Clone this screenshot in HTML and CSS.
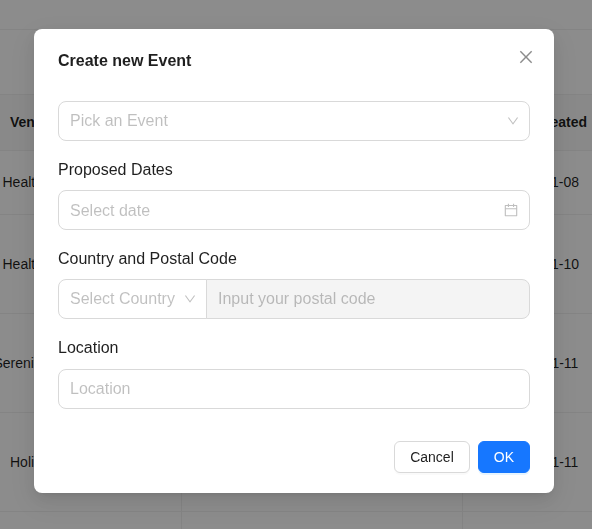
FILE: index.html
```html
<!DOCTYPE html>
<html lang="en">
<head>
<meta charset="utf-8">
<title>Create new Event</title>
<link rel="stylesheet" href="styles.css">
</head>
<body>
<main class="page">
  <div class="topbar"></div>
  <div class="toolbar"></div>
  <div class="table">
    <div class="row head"><div class="cell first">Ven</div><div class="cell"></div><div class="cell date">Created</div></div>
    <div class="row short"><div class="cell first health">Health</div><div class="cell"></div><div class="cell date">01-08</div></div>
    <div class="row"><div class="cell first health">Health</div><div class="cell"></div><div class="cell date">01-10</div></div>
    <div class="row"><div class="cell first serenity">Serenity</div><div class="cell"></div><div class="cell date narrow">01-11</div></div>
    <div class="row"><div class="cell first">Holi</div><div class="cell"></div><div class="cell date narrow">01-11</div></div>
    <div class="row"><div class="cell"></div><div class="cell"></div><div class="cell"></div></div>
  </div>
</main>
<div class="mask">
  <section class="modal" role="dialog" aria-label="Create new Event">
    <button class="close" aria-label="Close">
      <svg width="16" height="16" viewBox="64 64 896 896" fill="currentColor" fill-rule="evenodd"><path d="M799.86 166.31c.02 0 .04.02.08.06l57.69 57.7c.04.03.05.05.06.08a.12.12 0 010 .06c0 .03-.02.05-.06.09L569.93 512l287.7 287.7c.04.04.05.06.06.09a.12.12 0 010 .07c0 .02-.02.04-.06.08l-57.7 57.69c-.03.04-.05.05-.07.06a.12.12 0 01-.07 0c-.03 0-.05-.02-.09-.06L512 569.93l-287.7 287.7c-.04.04-.06.05-.09.06a.12.12 0 01-.07 0c-.02 0-.04-.02-.08-.06l-57.69-57.7c-.04-.03-.05-.05-.06-.07a.12.12 0 010-.07c0-.03.02-.05.06-.09L454.07 512l-287.7-287.7c-.04-.04-.05-.06-.06-.09a.12.12 0 010-.07c0-.02.02-.04.06-.08l57.7-57.69c.03-.04.05-.05.07-.06a.12.12 0 01.07 0c.03 0 .05.02.09.06L512 454.07l287.7-287.7c.04-.04.06-.05.09-.06a.12.12 0 01.07 0z"/></svg>
    </button>
    <h1 class="title">Create new Event</h1>
    <div class="control select">
      <span class="placeholder">Pick an Event</span>
      <svg class="icon" width="12" height="12" viewBox="64 64 896 896" fill="currentColor"><path d="M884 256h-75c-5.100 0-9.900 2.500-12.900 6.600L512 654.200 227.900 262.600c-3-4.100-7.800-6.600-12.900-6.600h-75c-6.500 0-10.300 7.400-6.500 12.700l352.600 486.100c12.800 17.600 39 17.600 51.700 0l352.600-486.100c3.900-5.300.1-12.700-6.400-12.700z"/></svg>
    </div>
    <div class="label">Proposed Dates</div>
    <div class="control">
      <span class="placeholder picker-text">Select date</span>
      <svg class="icon" width="14" height="14" viewBox="64 64 896 896" fill="currentColor"><path d="M880 184H712v-64c0-4.400-3.600-8-8-8h-56c-4.400 0-8 3.600-8 8v64H384v-64c0-4.400-3.600-8-8-8h-56c-4.400 0-8 3.600-8 8v64H144c-17.700 0-32 14.300-32 32v664c0 17.700 14.300 32 32 32h736c17.700 0 32-14.300 32-32V216c0-17.700-14.300-32-32-32zm-40 656H184V460h656v380zM184 392V256h128v48c0 4.400 3.600 8 8 8h56c4.400 0 8-3.600 8-8v-48h256v48c0 4.400 3.600 8 8 8h56c4.400 0 8-3.600 8-8v-48h128v136H184z"/></svg>
    </div>
    <div class="label">Country and Postal Code</div>
    <div class="compact">
      <div class="control select country">
        <span class="placeholder">Select Country</span>
        <svg class="icon" width="12" height="12" viewBox="64 64 896 896" fill="currentColor"><path d="M884 256h-75c-5.100 0-9.900 2.500-12.900 6.600L512 654.200 227.900 262.600c-3-4.100-7.800-6.600-12.900-6.600h-75c-6.500 0-10.300 7.400-6.500 12.700l352.600 486.100c12.800 17.600 39 17.600 51.700 0l352.600-486.100c3.900-5.300.1-12.700-6.400-12.700z"/></svg>
      </div>
      <div class="control postal"><span class="placeholder">Input your postal code</span></div>
    </div>
    <div class="label last">Location</div>
    <div class="control"><span class="placeholder">Location</span></div>
    <div class="footer">
      <button class="btn cancel">Cancel</button>
      <button class="btn ok">OK</button>
    </div>
  </section>
</div>
</body>
</html>
```
FILE: styles.css
```css
* { box-sizing: border-box; }

body {
  margin: 0;
  height: 529px;
  overflow: hidden;
  background: #fff;
  color: rgba(0, 0, 0, 0.88);
  font: 14px/22px "Liberation Sans", Arial, sans-serif;
}

.page { height: 529px; overflow: hidden; }
.topbar { height: 30px; border-bottom: 1px solid #f0f0f0; }
.toolbar { height: 65px; border-bottom: 1px solid #f0f0f0; }

.row { display: grid; grid-template-columns: 182px 281px 129px; height: 99px; }
.row.head { height: 56px; background: #fafafa; font-weight: 600; }
.row.short { height: 64px; }
.cell {
  display: flex;
  align-items: center;
  border-right: 1px solid #f0f0f0;
  border-bottom: 1px solid #f0f0f0;
  white-space: nowrap;
}
.head .cell, .short .cell { padding-bottom: 2px; }
.cell:last-child { border-right: 0; }
.first { padding-left: 10px; }
.health { padding-left: 2.5px; }
.serenity { padding-left: 0; text-indent: -6.6px; }
.date { justify-content: flex-end; padding-right: 13px; }
.date.narrow { padding-right: 13.6px; }
.head .date { padding-right: 5px; }

.mask {
  position: fixed;
  inset: 0;
  padding: 29px 38px 0 34px;
  background: rgba(0, 0, 0, 0.45);
}

.modal {
  position: relative;
  height: 464px;
  padding: 20px 24px;
  border-radius: 8px;
  background: #fff;
  box-shadow: 0 6px 16px 0 rgba(0, 0, 0, 0.08), 0 3px 6px -4px rgba(0, 0, 0, 0.12), 0 9px 28px 8px rgba(0, 0, 0, 0.05);
}

.title { margin: 0 0 28px; font-size: 16px; line-height: 24px; font-weight: 600; }

.close {
  position: absolute;
  top: 17px;
  right: 17px;
  display: flex;
  align-items: center;
  justify-content: center;
  width: 22px;
  height: 22px;
  padding: 0;
  border: 0;
  background: transparent;
  color: rgba(0, 0, 0, 0.45);
}

.label { margin: 16px 0 8px; font-size: 16px; line-height: 25px; }
.label.last { margin-bottom: 9px; }

.control {
  display: flex;
  align-items: center;
  justify-content: space-between;
  height: 40px;
  padding: 0 11px;
  border: 1px solid #d9d9d9;
  border-radius: 8px;
  background: #fff;
  font-size: 16px;
  line-height: 24px;
}
.select { padding-right: 10px; }
.placeholder { color: rgba(0, 0, 0, 0.25); white-space: nowrap; }
.picker-text { padding-top: 2px; }
.icon { flex: none; color: rgba(0, 0, 0, 0.25); }

.compact { display: flex; }
.country { width: 149px; border-radius: 8px 0 0 8px; }
.postal { flex: 1; margin-left: -1px; border-radius: 0 8px 8px 0; background: #f4f4f4; }

.footer { display: flex; justify-content: flex-end; gap: 8px; margin-top: 32px; }
.btn {
  height: 32px;
  padding: 4px 15px;
  border: 1px solid #d9d9d9;
  border-radius: 6px;
  background: #fff;
  color: rgba(0, 0, 0, 0.88);
  font: inherit;
  box-shadow: 0 2px 0 rgba(0, 0, 0, 0.02);
}
.btn.ok { border-color: #1677ff; background: #1677ff; color: #fff; box-shadow: 0 2px 0 rgba(5, 145, 255, 0.1); }
```
